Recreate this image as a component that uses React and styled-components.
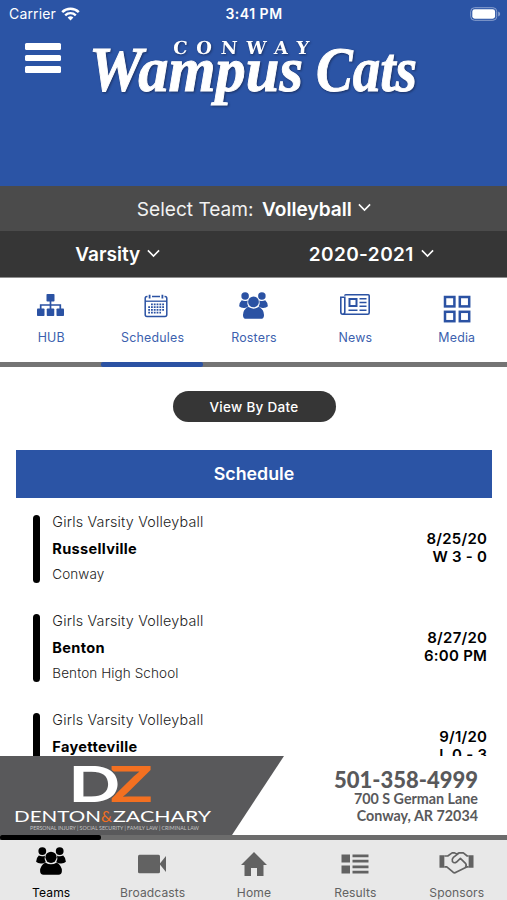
import styled, { createGlobalStyle } from "styled-components";

const GAMES = [
  {
    team: "Girls Varsity Volleyball",
    opponent: "Russellville",
    place: "Conway",
    date: "8/25/20",
    result: "W 3 - 0",
  },
  {
    team: "Girls Varsity Volleyball",
    opponent: "Benton",
    place: "Benton High School",
    date: "8/27/20",
    result: "6:00 PM",
  },
  {
    team: "Girls Varsity Volleyball",
    opponent: "Fayetteville",
    place: "Fayetteville",
    date: "9/1/20",
    result: "L 0 - 3",
  },
];

const TABS = [
  { label: "HUB", icon: <SitemapIcon />, shift: -0.7 },
  { label: "Schedules", icon: <CalendarIcon />, shift: 3.5 },
  { label: "Rosters", icon: <GroupIcon />, shift: -0.2 },
  { label: "News", icon: <NewsIcon />, shift: 0 },
  { label: "Media", icon: <GridIcon />, shift: 1 },
];

const NAV_ITEMS = [
  { label: "Teams", icon: <GroupIcon />, active: true },
  { label: "Broadcasts", icon: <CameraIcon /> },
  { label: "Home", icon: <HomeIcon /> },
  { label: "Results", icon: <ListIcon /> },
  { label: "Sponsors", icon: <HandshakeIcon /> },
];

// width, height, top offset
const TAB_ICON_SIZES = {
  HUB: [27, 22, 2],
  Schedules: [24, 24, 1.5],
  Rosters: [29, 27, 0],
  News: [30, 21, 2],
  Media: [28, 28, 2.5],
};

const NAV_ICON_SIZES = {
  Teams: [30, 28, 0],
  Broadcasts: [30, 20, 7],
  Home: [26, 24, 4.5],
  Results: [28, 20, 7],
  Sponsors: [35, 24, 3.5],
};

export default function App() {
  return (
    <Page>
      <GlobalStyle />
      <Header>
        <StatusBar>
          <Carrier>
            Carrier <WifiIcon />
          </Carrier>
          <Clock>3:41 PM</Clock>
          <BatteryIcon />
        </StatusBar>
        <Brand>
          <MenuButton aria-label="Menu">
            <MenuLine />
            <MenuLine />
            <MenuLine />
          </MenuButton>
          <Logo />
        </Brand>
      </Header>
      <TeamSelect>
        <SelectLabel>Select Team:</SelectLabel>
        <TeamName>Volleyball</TeamName>
        <Chevron />
      </TeamSelect>
      <FilterBar>
        <Filter>
          Varsity <Chevron />
        </Filter>
        <Filter $spacing="0.42px">
          2020-2021 <Chevron />
        </Filter>
      </FilterBar>
      <Tabs>
        {TABS.map((tab) => (
          <Tab key={tab.label}>
            <IconBox $size={TAB_ICON_SIZES[tab.label]} $shift={tab.shift}>
              {tab.icon}
            </IconBox>
            <TabLabel>{tab.label}</TabLabel>
          </Tab>
        ))}
      </Tabs>
      <Track $color="#747474">
        <Marker $column={2} $color="#2b52a3" />
      </Track>
      <Content>
        <ViewButton>View By Date</ViewButton>
        <ScheduleTitle>Schedule</ScheduleTitle>
        {GAMES.map((game) => (
          <Game key={game.date}>
            <GameBar />
            <GameInfo>
              <GameTeam>{game.team}</GameTeam>
              <Opponent>{game.opponent}</Opponent>
              <Place>{game.place}</Place>
            </GameInfo>
            <GameResult>
              <div>{game.date}</div>
              <div>{game.result}</div>
            </GameResult>
          </Game>
        ))}
      </Content>
      <Sponsor>
        <SponsorLogo />
        <SponsorContact>
          <Phone>501-358-4999</Phone>
          <Address>700 S German Lane</Address>
          <Address>Conway, AR 72034</Address>
        </SponsorContact>
      </Sponsor>
      <Track $color="#6c6c6c">
        <Marker $column={1} $color="#000" />
      </Track>
      <BottomNav>
        {NAV_ITEMS.map((item) => (
          <NavItem key={item.label} $active={item.active}>
            <IconBox $size={NAV_ICON_SIZES[item.label]} $shift={0.3}>
              {item.icon}
            </IconBox>
            <NavLabel>{item.label}</NavLabel>
          </NavItem>
        ))}
      </BottomNav>
    </Page>
  );
}

function WifiIcon() {
  return (
    <svg width="19" height="14" viewBox="0 0 19 14" fill="none" stroke="#fff">
      <path d="M1.2 5.2a11.8 11.8 0 0 1 16.6 0" strokeWidth="2.5" />
      <path d="M4.2 8.3a7.6 7.6 0 0 1 10.6 0" strokeWidth="2.4" />
      <path d="M6.6 10.6a4.1 4.1 0 0 1 5.8 0L9.5 13.5z" fill="#fff" stroke="none" />
    </svg>
  );
}

function BatteryIcon() {
  return (
    <svg width="31" height="14" viewBox="0 0 31 14">
      <rect x="0.7" y="0.7" width="26" height="12.6" rx="3.8" fill="none" stroke="#8ba1cf" />
      <rect x="2.3" y="2.3" width="22.8" height="9.4" rx="2.4" fill="#fff" />
      <path d="M28.2 4.6q2 .7 2 2.4t-2 2.4z" fill="#8ba1cf" />
    </svg>
  );
}

function Logo() {
  return (
    <LogoSvg width="330" height="76" viewBox="0 0 330 76">
      <g
        fontFamily="Liberation Serif, serif"
        fontWeight="700"
        fontStyle="italic"
        fontSize="53"
        fill="#fff"
        stroke="#fff"
        strokeWidth="0.8"
      >
        <text
          transform="translate(-1 55.5) scale(1 1.2)"
          textLength="214"
          lengthAdjust="spacingAndGlyphs"
        >
          Wampus
        </text>
        <text
          transform="translate(226 55.5) scale(1 1.2)"
          textLength="101"
          lengthAdjust="spacingAndGlyphs"
        >
          Cats
        </text>
      </g>
      <text
        x="84"
        y="19.5"
        transform="skewX(-4)"
        fontFamily="DejaVu Serif, serif"
        fontWeight="700"
        fontSize="18"
        fill="#fff"
        textLength="136"
      >
        CONWAY
      </text>
    </LogoSvg>
  );
}

function Chevron() {
  return (
    <ChevronSvg width="13" height="9" viewBox="0 0 13 9" fill="none">
      <path d="M0.9 1.4 6.5 7l5.6-5.6" stroke="#fff" strokeWidth="1.6" />
    </ChevronSvg>
  );
}

function SitemapIcon() {
  return (
    <svg viewBox="0 0 27 22" fill="currentColor">
      <rect x="9.5" y="0" width="8" height="7.5" rx="0.8" />
      <rect x="0" y="14.5" width="7.5" height="7.5" rx="0.8" />
      <rect x="9.75" y="14.5" width="7.5" height="7.5" rx="0.8" />
      <rect x="19.5" y="14.5" width="7.5" height="7.5" rx="0.8" />
      <path d="M13.5 7v8M3.7 15v-4h19.6v4" fill="none" stroke="currentColor" strokeWidth="1.7" />
    </svg>
  );
}

function CalendarIcon() {
  return (
    <svg viewBox="0 0 24 24" fill="none" stroke="currentColor">
      <path
        d="M3.5 2.6H3Q1.2 2.6 1.2 4.5V20.4Q1.2 22.4 3 22.4H21Q22.8 22.4 22.8 20.4V4.5Q22.8 2.6 21 2.6h-.5M8 2.6h8"
        strokeWidth="1.5"
      />
      <path d="M5.6 0.8v3.6M18.4 0.8v3.6" strokeWidth="1.8" />
      <path d="M1.2 7.2h21.6" strokeWidth="1.3" />
      <path
        d="M7 10.3H20.5M4.2 13.1H20.5M4.2 15.9H20.5M4.2 18.7H17"
        strokeWidth="1.7"
        strokeDasharray="1.8 1"
      />
    </svg>
  );
}

function GroupIcon() {
  return (
    <svg viewBox="0 0 30 28" fill="currentColor">
      <circle cx="6.3" cy="4.1" r="3.9" />
      <circle cx="23.7" cy="4.1" r="3.9" />
      <path d="M2.8 8.5q-2.8 2.6-2.7 6.2 1.8 2 5.4 1.8 2.6 0 4.2-1.6-1.7-3-.8-6.2-3 1.2-6.1-.2z" />
      <path d="M27.2 8.5q2.8 2.6 2.7 6.2-1.8 2-5.4 1.8-2.6 0-4.2-1.6 1.7-3 .8-6.2 3 1.2 6.1-.2z" />
      <circle cx="15" cy="10.3" r="5.6" />
      <path d="M9.3 15.4q5.7 3.8 11.4 0 5.3 3.2 5.2 8.6 0 3.7-3.4 3.8h-15Q4.1 27.7 4.1 24q-.1-5.4 5.2-8.6z" />
    </svg>
  );
}

function NewsIcon() {
  return (
    <svg viewBox="0 0 30 21" fill="none" stroke="currentColor" strokeWidth="1.6">
      <path d="M4.8 1.8Q4.8.8 5.8.8H28.2Q29.2.8 29.2 1.8V18.7Q29.2 20.2 27.7 20.2H2.8Q.8 20.2.8 18V3.2H4.8V18Q4.8 20 2.8 20.2" />
      <rect x="9.5" y="5" width="7" height="7" strokeWidth="2" />
      <path d="M19.5 4.8h7M19.5 8.5h7M19.5 12.3h7M19.5 16.2h7M8.5 16.2h9" />
    </svg>
  );
}

function GridIcon() {
  return (
    <svg viewBox="0 0 28 28" fill="none" stroke="currentColor" strokeWidth="2.5">
      <rect x="2" y="2" width="9.4" height="9.4" />
      <rect x="16.8" y="2" width="9.4" height="9.4" />
      <rect x="2" y="16.8" width="9.4" height="9.4" />
      <rect x="16.8" y="16.8" width="9.4" height="9.4" />
    </svg>
  );
}

function CameraIcon() {
  return (
    <svg viewBox="0 0 30 20" fill="currentColor">
      <rect x="1" y="0.7" width="22" height="18.6" rx="1.5" />
      <path d="M22.5 10 29 2v16z" />
    </svg>
  );
}

function HomeIcon() {
  return (
    <svg viewBox="0 0 26 24" fill="currentColor">
      <path d="M13 0 26 13h-3.500v11h-6.500v-8h-6v8H3.500V13H0z" />
    </svg>
  );
}

function ListIcon() {
  return (
    <svg viewBox="0 0 28 20" fill="currentColor">
      <path d="M.5.5h8.5v8H.5zM.5 11.5h8.5v8H.5zM11.5.5h16v2.7h-16zM11.5 5.8h16v2.7h-16zM11.5 11.5h16v2.7h-16zM11.5 16.8h16v2.7h-16z" />
    </svg>
  );
}

function HandshakeIcon() {
  return (
    <svg viewBox="0 0 36 24" fill="none" stroke="currentColor" strokeWidth="1.7" strokeLinejoin="round">
      <path d="M0.5 4h5v13h-5zM30.5 4h5v13h-5z" fill="currentColor" stroke="none" />
      <path d="M5.5 4.8H9L13.5 1.6H16L18.2 2.8 20.5 1.6H25L29 4.8h1.5M5.5 16H8l6.5 5.500q1.500 1.200 3 0l11-5.500h2" />
      <path d="M20.500 1.800 14.800 6.200Q13 8 13.800 10.500q1.800 2.200 4.200.5L22 7.200l5.500 5.500q1.200 1.800-.5 3.300" />
    </svg>
  );
}

function SponsorLogo() {
  return (
    <svg width="285" height="79" viewBox="0 0 285 79">
      <path d="M0 0H284L232 79H0z" fill="#59595b" />
      <g fontFamily="Inter, sans-serif" fontWeight="600">
        <text transform="translate(107.5 46) scale(1.45 1)" fontSize="50" fill="#f37021">
          Z
        </text>
        <text
          transform="translate(68.5 46) scale(1.46 1)"
          fontSize="50"
          fill="#fff"
          stroke="#59595b"
          strokeWidth="2"
          paintOrder="stroke"
        >
          D
        </text>
      </g>
      <g fontFamily="Lato, sans-serif" fontSize="16" fill="#fff">
        <text x="14" y="65.5" textLength="87" lengthAdjust="spacingAndGlyphs">
          DENTON
        </text>
        <text x="101" y="65.5" fill="#f37021" textLength="11" lengthAdjust="spacingAndGlyphs">
          &amp;
        </text>
        <text x="113" y="65.5" textLength="98" lengthAdjust="spacingAndGlyphs">
          ZACHARY
        </text>
      </g>
      <text
        x="30"
        y="74"
        fontFamily="Lato, sans-serif"
        fontSize="5"
        fill="#c4c4c4"
        textLength="169"
        lengthAdjust="spacingAndGlyphs"
      >
        PERSONAL INJURY | SOCIAL SECURITY | FAMILY LAW | CRIMINAL LAW
      </text>
    </svg>
  );
}

const GlobalStyle = createGlobalStyle`
  * {
    box-sizing: border-box;
  }

  body {
    margin: 0;
    font-family: Inter, "Liberation Sans", sans-serif;
  }
`;

const Page = styled.div`
  display: flex;
  flex-direction: column;
  height: 900px;
  overflow: hidden;
  background: #fff;
`;

const Header = styled.header`
  flex: none;
  height: 186px;
  background: #2b54a5;
`;

const StatusBar = styled.div`
  display: grid;
  grid-template-columns: 1fr auto 1fr;
  align-items: center;
  height: 27px;
  padding: 0 6px 0 9px;
  color: #fff;
  font-size: 14px;

  > svg {
    justify-self: end;
  }
`;

const Carrier = styled.div`
  display: flex;
  align-items: center;
  gap: 5.5px;
  letter-spacing: 0.15px;
`;

const Clock = styled.div`
  margin-right: 2px;
  font-weight: 600;
  letter-spacing: 0.5px;
`;

const Brand = styled.div`
  display: flex;
  align-items: flex-start;
  padding: 8px 0 0 25px;
`;

const MenuButton = styled.button`
  display: flex;
  flex-direction: column;
  gap: 5px;
  width: 36px;
  padding: 0;
  margin-top: 8px;
  border: none;
  background: none;
`;

const MenuLine = styled.span`
  height: 6.7px;
  border-radius: 1.5px;
  background: #fff;
`;

const LogoSvg = styled.svg`
  margin-left: 29px;
  overflow: visible;
  filter: drop-shadow(1px 1px 1px #1b3164);
`;

const ChevronSvg = styled.svg`
  margin-bottom: 2px;
`;

const TeamSelect = styled.div`
  display: flex;
  flex: none;
  align-items: center;
  justify-content: center;
  gap: 6.5px;
  height: 45px;
  padding-left: 1px;
  background: #4b4b4b;
  color: #fff;
  font-size: 19.1px;
`;

const SelectLabel = styled.span`
  padding-right: 2px;
  color: #f2f2f2;
`;

const TeamName = styled.span`
  font-weight: 600;
`;

const FilterBar = styled.div`
  display: flex;
  flex: none;
  height: 47px;
  background: #363636;
  border-bottom: 1px solid #8f8f8f;
`;

const Filter = styled.div`
  display: flex;
  flex: 1;
  align-items: center;
  justify-content: center;
  gap: 7px;
  padding-right: 18px;
  color: #fff;
  font-size: 19px;
  font-weight: 600;
  letter-spacing: ${({ $spacing }) => $spacing || "0"};
`;

const Tabs = styled.nav`
  display: grid;
  flex: none;
  grid-template-columns: repeat(5, 1fr);
  height: 84px;
  padding-top: 14px;
`;

const Tab = styled.div`
  display: flex;
  flex-direction: column;
  align-items: center;
  color: #2b52a3;
`;

const IconBox = styled.div`
  height: 33px;
  padding-top: ${({ $size }) => $size[2]}px;
  margin-left: ${({ $shift }) => ($shift || 0) * 2}px;

  svg {
    display: block;
    width: ${({ $size }) => $size[0]}px;
    height: ${({ $size }) => $size[1]}px;
  }
`;

const TabLabel = styled.div`
  padding-left: 1px;
  margin-top: 5px;
  color: #3c5fae;
  font-size: 12.4px;
  line-height: 16px;
  letter-spacing: 0.2px;
`;

const Track = styled.div`
  display: grid;
  flex: none;
  grid-template-columns: repeat(5, 1fr);
  height: 5px;
  background: ${({ $color }) => $color};
`;

const Marker = styled.div`
  grid-column: ${({ $column }) => $column};
  border-radius: 2px;
  background: ${({ $color }) => $color};
`;

const Content = styled.main`
  flex: 1;
  min-height: 0;
  padding: 24px 15px 0 16px;
  overflow: hidden;
`;

const ViewButton = styled.button`
  display: block;
  width: 163px;
  height: 31px;
  padding: 0;
  margin: 0 auto 27.5px;
  border: none;
  border-radius: 16px;
  background: #363636;
  color: #fff;
  font: 500 13.5px Inter, sans-serif;
  letter-spacing: 0.3px;
`;

const ScheduleTitle = styled.h2`
  height: 48.5px;
  margin: 0;
  background: #2b54a5;
  color: #fff;
  font-size: 17.8px;
  font-weight: 600;
  line-height: 47.5px;
  text-align: center;
`;

const Game = styled.div`
  display: flex;
  height: 99px;
  padding: 17px 4.8px 0 16.5px;
`;

const GameBar = styled.div`
  width: 7.5px;
  height: 68px;
  border-radius: 4px;
  background: #000;
`;

const GameInfo = styled.div`
  flex: 1;
  padding-left: 12.3px;
  margin-top: -6px;
  line-height: 26px;
`;

const GameTeam = styled.div`
  color: #222;
  font-size: 14.3px;
  font-weight: 300;
  letter-spacing: 0.2px;
`;

const Opponent = styled.div`
  padding-top: 0.5px;
  margin-bottom: -0.5px;
  font-size: 14.6px;
  font-weight: 700;
  letter-spacing: 0.3px;
`;

const Place = styled.div`
  color: #222;
  font-size: 13.5px;
  font-weight: 300;
  letter-spacing: 0.1px;
`;

const GameResult = styled.div`
  margin-top: 14.5px;
  font-size: 15px;
  font-weight: 600;
  line-height: 18.5px;
  letter-spacing: 0.25px;
  text-align: right;
`;

const Sponsor = styled.section`
  display: flex;
  flex: none;
  justify-content: space-between;
  height: 79px;
  background: #fff;
`;

const SponsorContact = styled.div`
  padding: 12px 29px 0 0;
  color: #59595b;
  font-family: Lato, sans-serif;
  font-weight: 700;
  text-align: right;
`;

const Phone = styled.div`
  font-size: 22px;
  font-weight: 900;
  line-height: 23px;
`;

const Address = styled.div`
  font-size: 14.3px;
  line-height: 16.5px;
`;

const BottomNav = styled.nav`
  display: grid;
  flex: none;
  grid-template-columns: repeat(5, 1fr);
  height: 60px;
  padding-top: 7px;
  background: #e8e8e8;
`;

const NavItem = styled.div`
  display: flex;
  flex-direction: column;
  align-items: center;
  color: ${({ $active }) => ($active ? "#000" : "#626262")};
`;

const NavLabel = styled.div`
  padding-left: 1px;
  margin-top: 5px;
  font-size: 12.1px;
  line-height: 16px;
  letter-spacing: 0.1px;
`;
